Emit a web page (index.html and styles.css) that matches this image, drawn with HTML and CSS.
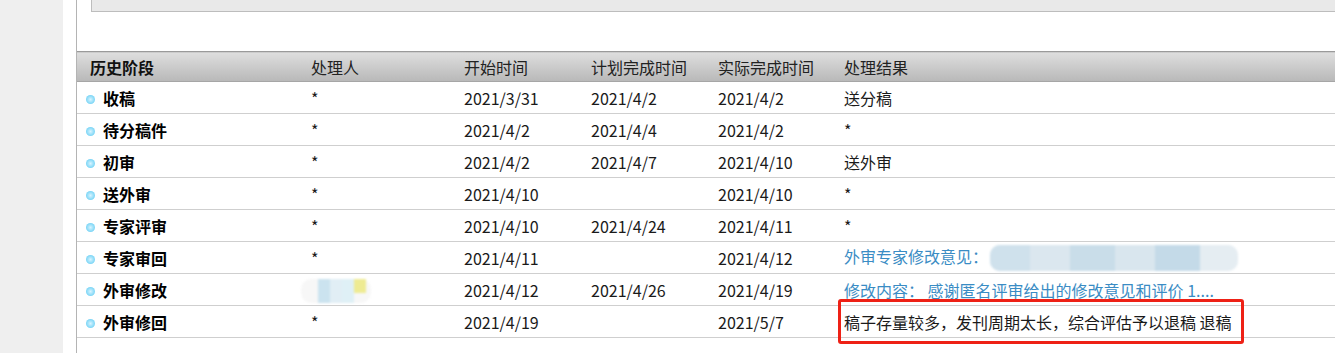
FILE: index.html
```html
<!DOCTYPE html>
<html lang="zh">
<head>
<meta charset="utf-8">
<link rel="stylesheet" href="styles.css">
</head>
<body>
<div class="page">
  <aside class="sidebar"></aside>
  <main class="main">
    <div class="panel">
      <div class="topbox"></div>
      <div class="spacer"></div>
      <table class="history">
        <colgroup>
          <col class="c-stage"><col class="c-person"><col class="c-date"><col class="c-date"><col class="c-date2"><col>
        </colgroup>
        <thead>
          <tr>
            <th class="stage-h">历史阶段</th><th>处理人</th><th>开始时间</th><th>计划完成时间</th><th>实际完成时间</th><th>处理结果</th>
          </tr>
        </thead>
        <tbody>
          <tr><td class="stage"><span class="dot"></span>收稿</td><td>*</td><td>2021/3/31</td><td>2021/4/2</td><td>2021/4/2</td><td>送分稿</td></tr>
          <tr><td class="stage"><span class="dot"></span>待分稿件</td><td>*</td><td>2021/4/2</td><td>2021/4/4</td><td>2021/4/2</td><td>*</td></tr>
          <tr><td class="stage"><span class="dot"></span>初审</td><td>*</td><td>2021/4/2</td><td>2021/4/7</td><td>2021/4/10</td><td>送外审</td></tr>
          <tr><td class="stage"><span class="dot"></span>送外审</td><td>*</td><td>2021/4/10</td><td></td><td>2021/4/10</td><td>*</td></tr>
          <tr><td class="stage"><span class="dot"></span>专家评审</td><td>*</td><td>2021/4/10</td><td>2021/4/24</td><td>2021/4/11</td><td>*</td></tr>
          <tr><td class="stage"><span class="dot"></span>专家审回</td><td>*</td><td>2021/4/11</td><td></td><td>2021/4/12</td><td class="result"><span class="link">外审专家修改意见：</span><span class="mask mask-wide"><i class="m1"></i><i class="m2"></i><i class="m3"></i><i class="m4"></i><i class="m5"></i><i class="m6"></i></span></td></tr>
          <tr><td class="stage"><span class="dot"></span>外审修改</td><td class="person"><span class="mask mask-small"><i class="s1"></i><i class="s2"></i><i class="s3"></i><i class="s4"></i></span></td><td>2021/4/12</td><td>2021/4/26</td><td>2021/4/19</td><td class="result"><span class="link">修改内容： 感谢匿名评审给出的修改意见和评价 1....</span></td></tr>
          <tr><td class="stage"><span class="dot"></span>外审修回</td><td>*</td><td>2021/4/19</td><td></td><td>2021/5/7</td><td class="result final">稿子存量较多，发刊周期太长，综合评估予以退稿 退稿<span class="redbox"></span></td></tr>
        </tbody>
      </table>
      <div class="bottom"></div>
    </div>
  </main>
</div>
</body>
</html>
```

FILE: styles.css
```css
html, body {
  margin: 0;
  padding: 0;
  background: #fff;
  overflow: hidden;
}
body {
  font-family: "Noto Sans CJK SC", "Noto Sans", sans-serif;
  font-size: 16px;
  color: #1a1a1a;
}
.page {
  display: flex;
  width: 1400px;
  height: 353px;
}
.sidebar {
  width: 63px;
  flex: none;
  background: #efefef;
}
.main {
  flex: 1;
  padding-left: 13px;
  background: #fff;
}
.panel {
  height: 100%;
  border-left: 1px solid #b4b4b4;
  display: flex;
  flex-direction: column;
}
.topbox {
  margin-left: 14px;
  height: 11px;
  background: #e9e9e9;
  border-left: 1px solid #bdbdbd;
  border-bottom: 1px solid #bdbdbd;
}
.spacer {
  height: 39px;
}
.history {
  border-collapse: collapse;
  table-layout: fixed;
  width: 100%;
}
.c-stage { width: 234px; }
.c-person { width: 153px; }
.c-date { width: 127px; }
.c-date2 { width: 126px; }
.history th {
  height: 29px;
  padding: 0;
  text-align: left;
  font-weight: normal;
  color: #222;
  background: linear-gradient(#dedede, #b8b8b8);
  border-top: 1px solid #9a9a9a;
  border-bottom: 1px solid #a6a6a6;
  white-space: nowrap;
}
.history th.stage-h {
  padding-left: 13px;
  font-weight: bold;
  color: #111;
}
.history td {
  height: 31px;
  padding: 0;
  border-bottom: 1px solid #cfcfcf;
  white-space: nowrap;
  color: #1a1a1a;
  vertical-align: middle;
}
.history td.stage {
  padding-left: 9px;
  font-weight: bold;
  color: #000;
}
.dot {
  display: inline-block;
  width: 9px;
  height: 9px;
  border-radius: 50%;
  background: radial-gradient(circle at 50% 50%, #d8f4ff 0%, #8fdcf8 55%, #4fc4f0 100%);
  margin-right: 8px;
  vertical-align: 1px;
}
.result {
  position: relative;
}
.link {
  color: #3a8cc4;
}
.mask {
  display: inline-flex;
  vertical-align: middle;
  filter: blur(1.2px);
}
.mask i { display: block; }
.mask-wide {
  height: 26px;
  width: 248px;
  background: linear-gradient(90deg, #dbe8ef, #d2e3ee 50%, #e6eef3 85%, #f3f6f8);
  border-radius: 10px;
  overflow: hidden;
  margin-left: 2px;
}
.mask-wide .m1 { width: 40px; background: #cfe1ec; }
.mask-wide .m2 { width: 40px; background: #dbe7ef; }
.mask-wide .m3 { width: 45px; background: #c9dde9; }
.mask-wide .m4 { width: 40px; background: #d9e6ee; }
.mask-wide .m5 { width: 45px; background: #c4dae8; }
.mask-wide .m6 { width: 38px; background: #e5edf2; }
.person {
  position: relative;
}
.mask-small {
  margin-left: -10px;
  height: 24px;
  width: 70px;
  background: #f7f7f7;
  border-radius: 10px;
  padding-left: 17px;
  box-sizing: border-box;
}
.mask-small .s1 { width: 12px; background: #cbe3ef; }
.mask-small .s2 { width: 12px; background: #e1eef5; }
.mask-small .s3 { width: 12px; background: #dff0f6; }
.mask-small .s4 { width: 12px; height: 14px; background: #eeeb93; }
.redbox {
  position: absolute;
  left: -6px;
  top: -7px;
  width: 406px;
  height: 45px;
  box-sizing: border-box;
  border: 3px solid #ee2116;
  border-radius: 3px;
}
.bottom {
  flex: 1;
}
```
